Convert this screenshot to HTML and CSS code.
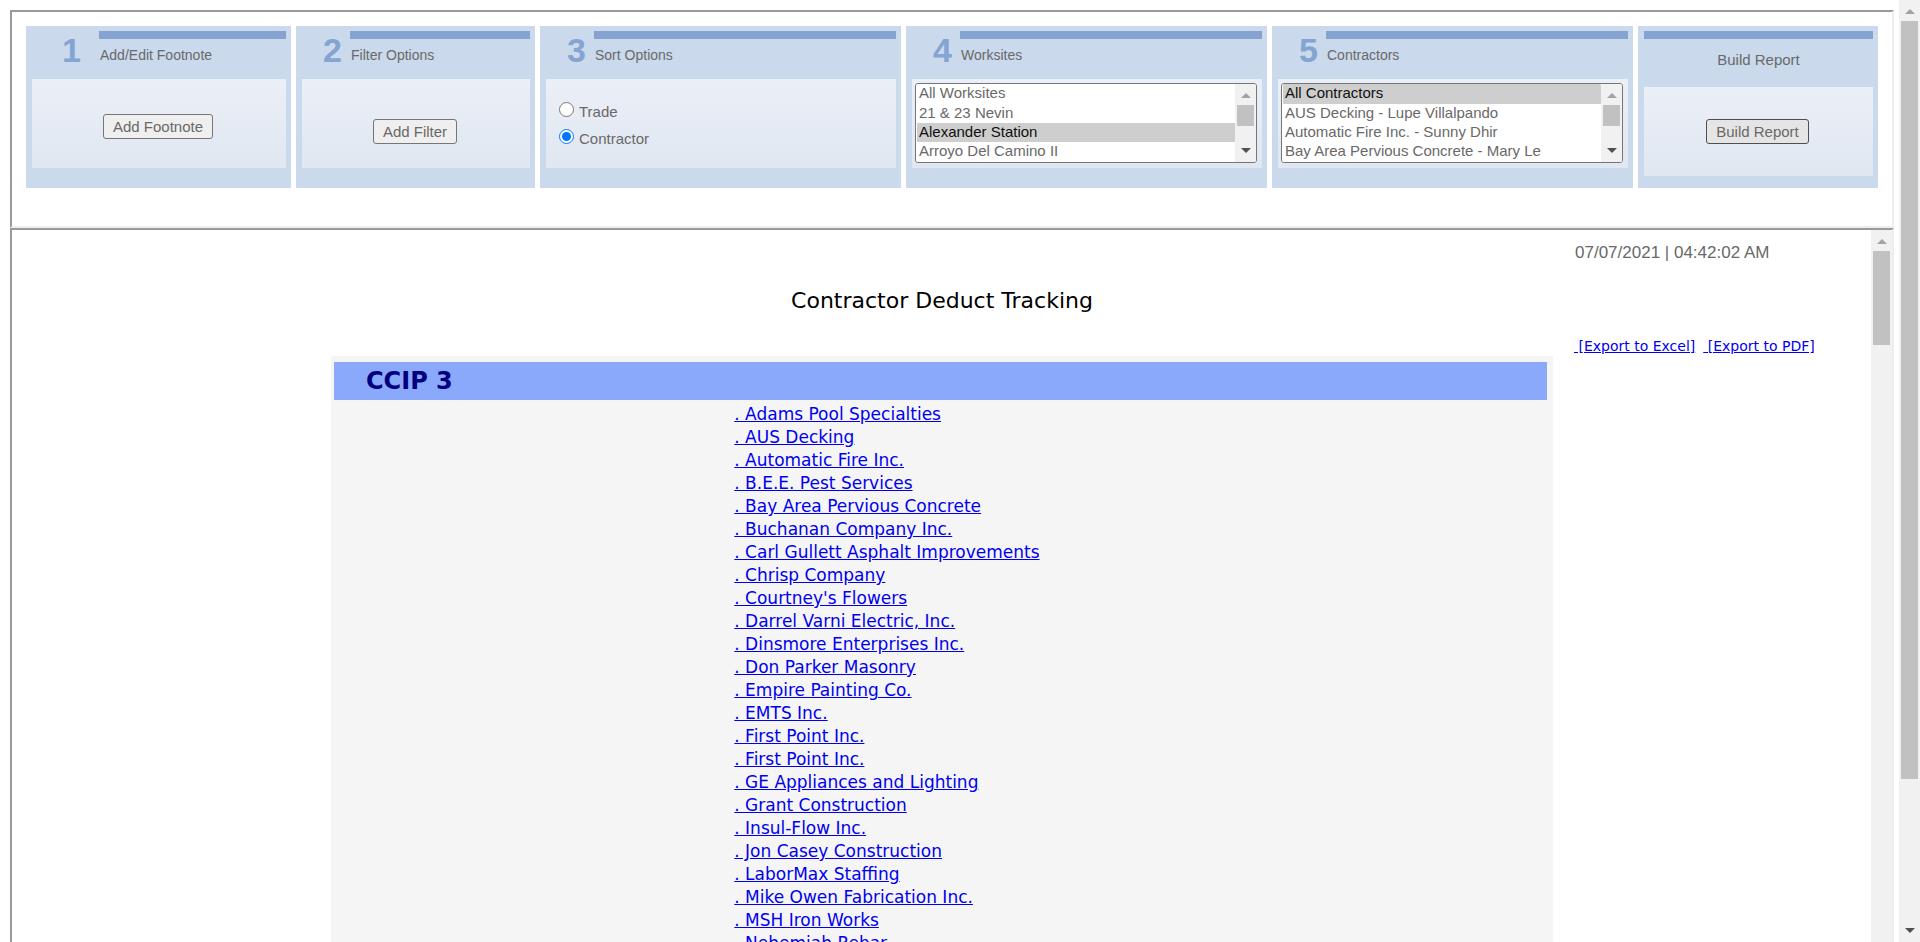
FILE: index.html
```html
<!DOCTYPE html>
<html lang="en">
<head>
<meta charset="utf-8">
<title>Contractor Deduct Tracking</title>
<link rel="stylesheet" href="styles.css">
</head>
<body>
<div class="page">
  <form class="frame options">
    <section class="panel wide-num">
      <header class="panel-head">
        <span class="num">1</span>
        <div class="head-text"><div class="bar"></div><h2 class="panel-title">Add/Edit Footnote</h2></div>
      </header>
      <div class="panel-body footnote-body"><button type="button" class="btn">Add Footnote</button></div>
    </section>
    <section class="panel">
      <header class="panel-head">
        <span class="num">2</span>
        <div class="head-text"><div class="bar"></div><h2 class="panel-title">Filter Options</h2></div>
      </header>
      <div class="panel-body filter-body"><button type="button" class="btn">Add Filter</button></div>
    </section>
    <section class="panel">
      <header class="panel-head">
        <span class="num">3</span>
        <div class="head-text"><div class="bar"></div><h2 class="panel-title">Sort Options</h2></div>
      </header>
      <div class="panel-body sort-body">
        <label class="radio"><input type="radio" name="sort"><span>Trade</span></label>
        <label class="radio"><input type="radio" name="sort" checked><span>Contractor</span></label>
      </div>
    </section>
    <section class="panel">
      <header class="panel-head">
        <span class="num">4</span>
        <div class="head-text"><div class="bar"></div><h2 class="panel-title" id="worksites-title">Worksites</h2></div>
      </header>
      <div class="panel-body list-body">
        <div class="listbox">
          <select multiple size="4" aria-labelledby="worksites-title">
            <option>All Worksites</option>
            <option>21 &amp; 23 Nevin</option>
            <option selected>Alexander Station</option>
            <option>Arroyo Del Camino II</option>
          </select>
          <div class="scroll"><i class="up"></i><i class="thumb short-thumb"></i><i class="down"></i></div>
        </div>
      </div>
    </section>
    <section class="panel">
      <header class="panel-head">
        <span class="num">5</span>
        <div class="head-text"><div class="bar"></div><h2 class="panel-title" id="contractors-title">Contractors</h2></div>
      </header>
      <div class="panel-body list-body">
        <div class="listbox">
          <select multiple size="4" aria-labelledby="contractors-title">
            <option selected>All Contractors</option>
            <option>AUS Decking - Lupe Villalpando</option>
            <option>Automatic Fire Inc. - Sunny Dhir</option>
            <option>Bay Area Pervious Concrete - Mary Le</option>
          </select>
          <div class="scroll"><i class="up"></i><i class="thumb short-thumb"></i><i class="down"></i></div>
        </div>
      </div>
    </section>
    <section class="panel build">
      <header class="panel-head">
        <div class="head-text"><div class="bar"></div><h2 class="panel-title">Build Report</h2></div>
      </header>
      <div class="panel-body"><button type="button" class="btn hovered">Build Report</button></div>
    </section>
  </form>

  <main class="frame report">
    <div class="report-grid">
      <p class="stamp">07/07/2021 | 04:42:02 AM</p>
      <h1 class="report-title">Contractor Deduct Tracking</h1>
      <p class="exports"><a href="#excel">&nbsp;[Export to Excel]</a><a href="#pdf">&nbsp;[Export to PDF]</a></p>
      <section class="group">
        <h2 class="group-title">CCIP 3</h2>
        <ul class="links">
          <li><a href="#c1">. Adams Pool Specialties</a></li>
          <li><a href="#c2">. AUS Decking</a></li>
          <li><a href="#c3">. Automatic Fire Inc.</a></li>
          <li><a href="#c4">. B.E.E. Pest Services</a></li>
          <li><a href="#c5">. Bay Area Pervious Concrete</a></li>
          <li><a href="#c6">. Buchanan Company Inc.</a></li>
          <li><a href="#c7">. Carl Gullett Asphalt Improvements</a></li>
          <li><a href="#c8">. Chrisp Company</a></li>
          <li><a href="#c9">. Courtney's Flowers</a></li>
          <li><a href="#c10">. Darrel Varni Electric, Inc.</a></li>
          <li><a href="#c11">. Dinsmore Enterprises Inc.</a></li>
          <li><a href="#c12">. Don Parker Masonry</a></li>
          <li><a href="#c13">. Empire Painting Co.</a></li>
          <li><a href="#c14">. EMTS Inc.</a></li>
          <li><a href="#c15">. First Point Inc.</a></li>
          <li><a href="#c16">. First Point Inc.</a></li>
          <li><a href="#c17">. GE Appliances and Lighting</a></li>
          <li><a href="#c18">. Grant Construction</a></li>
          <li><a href="#c19">. Insul-Flow Inc.</a></li>
          <li><a href="#c20">. Jon Casey Construction</a></li>
          <li><a href="#c21">. LaborMax Staffing</a></li>
          <li><a href="#c22">. Mike Owen Fabrication Inc.</a></li>
          <li><a href="#c23">. MSH Iron Works</a></li>
          <li><a href="#c24">. Nehemiah Rebar</a></li>
        </ul>
      </section>
    </div>
    <div class="scroll"><i class="up"></i><i class="thumb report-thumb"></i></div>
  </main>
</div>
<div class="scroll page-scroll"><i class="up"></i><i class="thumb page-thumb"></i><i class="down"></i></div>
</body>
</html>
```
FILE: styles.css
```css
* { box-sizing: border-box; }
body {
  margin: 0;
  height: 100vh;
  overflow: hidden;
  display: flex;
  background: #fff;
  color: #696969;
  font-family: Arial, "Liberation Sans", sans-serif;
  font-size: 15px;
}
h1, h2, p, ul { margin: 0; padding: 0; font-weight: normal; }
a { color: #0000ee; }

.page {
  flex: 1;
  min-width: 0;
  display: flex;
  flex-direction: column;
  padding: 10px 5px 0 10px;
}
.frame {
  border: 2px solid;
  border-color: #9a9a9a #eee #eee #9a9a9a;
}

/* Option panels */
.options {
  display: grid;
  grid-template-columns: 265fr 239fr 361fr 361fr 361fr 240fr;
  gap: 5px;
  padding: 14px 14px 38px;
}
.panel {
  display: flex;
  flex-direction: column;
  min-width: 0;
  background: #cad9ec;
  padding: 5px 5px 20px 6px;
}
.panel-head { display: flex; height: 48px; }
.num {
  width: 48px;
  padding: 2px 8px 0 0;
  text-align: right;
  font-size: 34px;
  line-height: 34px;
  font-weight: bold;
  color: #84a4d1;
}
.wide-num .num { width: 67px; padding-right: 18px; }
.head-text { flex: 1; }
.bar { height: 8px; background: #84a3d0; }
.panel-title {
  margin: 8px 0 0 1px;
  font-size: 14px;
  line-height: 16px;
}
.panel-body {
  height: 89px;
  display: flex;
  align-items: center;
  justify-content: center;
  padding-right: 2px;
  background: linear-gradient(#ebeff7, #e0e7f1);
}
.footnote-body { padding-top: 6px; }
.filter-body { padding-top: 16px; }
.build { padding-bottom: 12px; }
.build .panel-head { height: 56px; }
.build .panel-title {
  margin: 12px 0 0;
  font-size: 15px;
  line-height: 17px;
  text-align: center;
}

.btn {
  height: 25px;
  padding: 0 9px;
  border: 1px solid #767676;
  border-radius: 3px;
  background: #efefef;
  color: inherit;
  font: 15px/17px Arial, "Liberation Sans", sans-serif;
}
.btn.hovered { background: #e5e5e5; border-color: #4f4f4f; }

.sort-body {
  flex-direction: column;
  align-items: flex-start;
  gap: 10px;
  padding: 1px 0 0 13px;
}
.radio { display: flex; gap: 5px; line-height: 17px; }
.radio span { padding-top: 2px; line-height: 15px; }
.radio input { width: 15px; height: 15px; margin: 0; }

.list-body { align-items: flex-start; padding: 4px 5px 0 3px; }
.listbox {
  flex: 1;
  display: flex;
  height: 80px;
  border: 1px solid #767676;
  border-radius: 3px;
  background: #fff;
  overflow: hidden;
}
.listbox select {
  flex: 1;
  min-width: 0;
  height: 78px;
  margin: 0;
  padding: 0 0 0 1px;
  border: 0;
  outline: 0;
  overflow: hidden;
  background: #fff;
  color: inherit;
  font: 15px/19px Arial, "Liberation Sans", sans-serif;
}
.listbox option {
  min-height: 19px;
  height: 19px;
  padding: 0 2px;
  line-height: 19px;
}
.listbox option:first-child { height: 20px; }
.listbox option:checked {
  background: #cecece linear-gradient(#cecece, #cecece);
  color: #101010;
}

/* Scroll tracks */
.scroll {
  width: 21px;
  flex: none;
  display: flex;
  flex-direction: column;
  align-items: center;
  background: #f1f1f1;
}
.up, .down { border: 5px solid transparent; }
.up { margin: 9px 0 7px; border-top: 0; border-bottom-color: #a3a3a3; }
.down { margin: auto 0 9px; border-bottom: 0; border-top-color: #505050; }
.thumb { width: 17px; background: #c1c1c1; }
.short-thumb { height: 21px; }
.report-thumb { height: 94px; }
.page-thumb { height: 80.5%; }

/* Report */
.report {
  flex: 1;
  min-height: 0;
  display: flex;
  border-bottom: 0;
}
.report-grid {
  flex: 1;
  min-height: 0;
  overflow: hidden;
  display: grid;
  grid-template-columns: 319fr 1222fr 318fr;
  grid-template-rows: auto auto auto 1fr;
  padding-top: 13px;
}
.stamp {
  grid-area: 1 / 3;
  padding-left: 22px;
  font-size: 17px;
  line-height: 20px;
}
.report-title {
  grid-area: 2 / 2;
  margin: 25px 0 24px;
  text-align: center;
  color: #000;
  font: 22px/26px Verdana, "DejaVu Sans", sans-serif;
}
.exports {
  grid-area: 3 / 3;
  display: flex;
  gap: 8px;
  padding-left: 21px;
  margin-bottom: 2px;
  font: 14px/16px Verdana, "DejaVu Sans", sans-serif;
}
.group {
  grid-area: 4 / 2;
  background: #f5f5f5;
  padding: 6px 6px 0 3px;
  font-family: Verdana, "DejaVu Sans", sans-serif;
}
.group-title {
  padding-left: 32px;
  background: #8ba9fa;
  color: #000080;
  font-size: 24px;
  line-height: 38px;
  font-weight: bold;
}
.links {
  list-style: none;
  margin-top: 3px;
  padding-left: 33%;
  font-size: 17px;
  line-height: 23px;
}
```
